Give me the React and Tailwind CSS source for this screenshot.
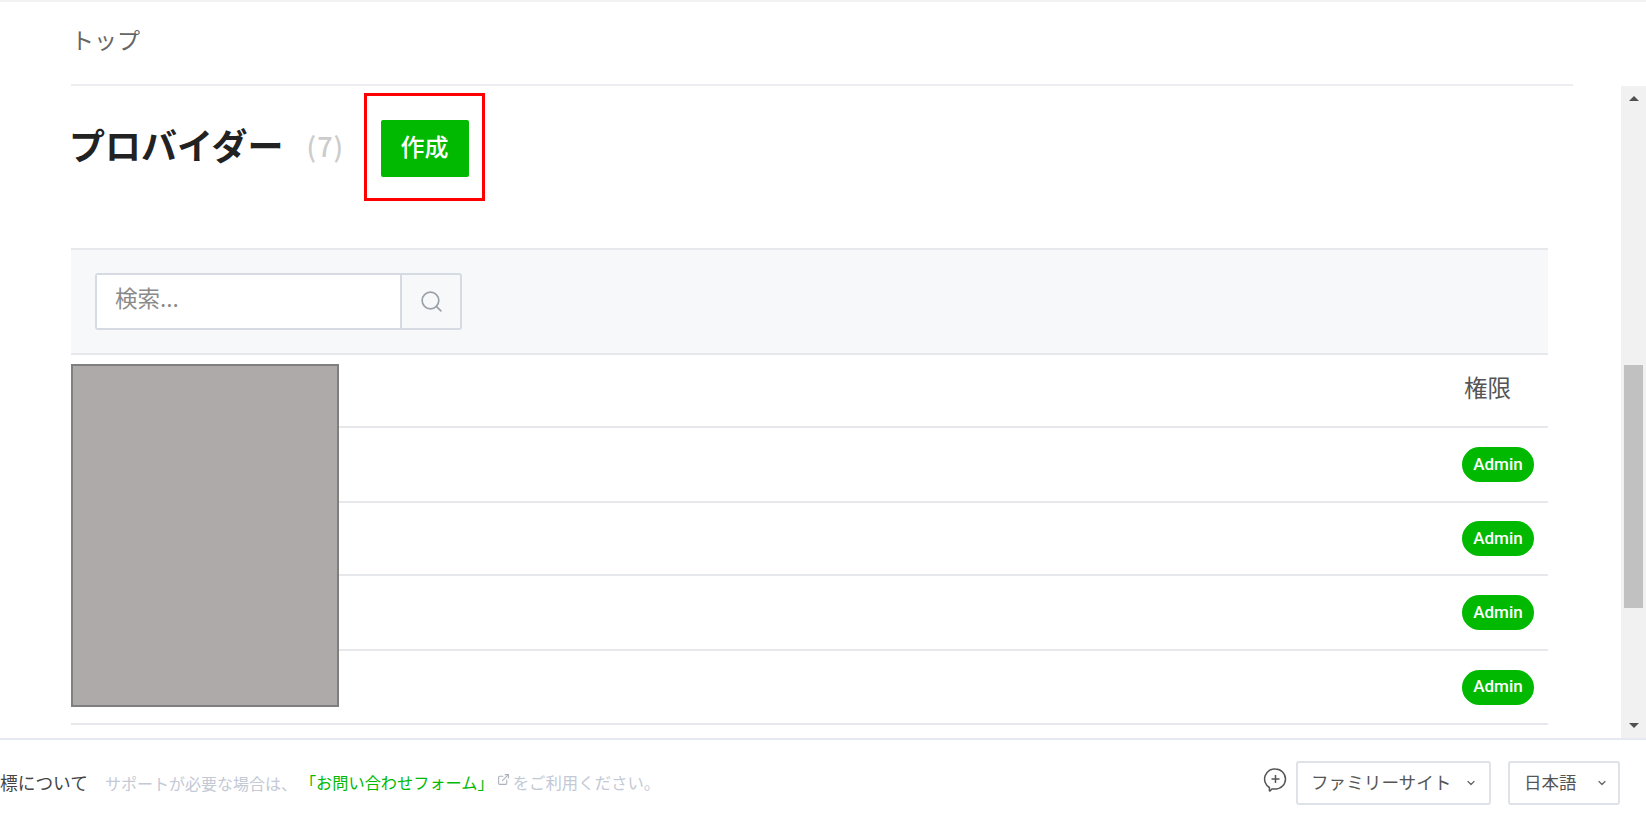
import React from 'react';
import { ChevronDown, ExternalLink, Search } from 'lucide-react';

const jp = 'font-["Noto_Sans_CJK_JP","Noto_Sans",sans-serif]';

const rows = ['h-[75px]', 'h-[73px]', 'h-[75px]', 'h-[74px]'];

const App = () => {
  return (
    <div className={`flex h-[825px] w-[1646px] flex-col overflow-hidden bg-white ${jp}`}>
      {/* breadcrumb */}
      <div className="border-t-2 border-[#f1f1f1] px-[71px]">
        <div className="mr-[2px] flex h-[84px] items-center border-b-2 border-[#eceef1] pb-[8px] text-[23px] text-[#666]">
          トップ
        </div>
      </div>

      <div className="flex min-h-0 flex-1">
        <main className="relative min-w-0 flex-1 pl-[71px] pr-[73px]">
          {/* title */}
          <div className="flex h-[162px] items-start">
            <h1 className="mt-[35px] -ml-[2px] text-[36px] font-bold leading-[46px] text-[#222]">プロバイダー</h1>
            <span className="ml-[23px] mt-[38px] w-[36px] text-center text-[27px] font-medium leading-[44px] tracking-[1px] text-[#ccc]">(7)</span>
            <div className="relative ml-[38px] mt-[34px]">
              <button className="flex h-[57px] w-[88px] items-center justify-center rounded-[2px] bg-[#00b900] pb-[6px] text-[24px] font-medium text-white">
                作成
              </button>
              <div className="absolute -bottom-[24px] -left-[17px] -right-[16px] -top-[27px] border-[3px] border-[#ff0000]" />
            </div>
          </div>

          {/* search */}
          <div className="flex h-[107px] items-center border-y-2 border-[#e6e8ec] bg-[#f7f8fa] pl-[24px]">
            <div className="flex h-[57px] w-[367px] rounded-[3px] border-2 border-[#d6dae2]">
              <div className="flex flex-1 items-center bg-white pb-[8px] pl-[18px] text-[22.5px] text-[#8a8a8a]">検索...</div>
              <div className="flex w-[60px] items-center justify-center border-l-2 border-[#d6dae2]">
                <Search size={25} strokeWidth={1.6} className="text-[#9aa0a8]" />
              </div>
            </div>
          </div>

          {/* table */}
          <div className="flex h-[73px] items-center justify-end border-b-2 border-[#e6e8ec] pb-[6px] pr-[37px] text-[23.5px] text-[#555]">
            権限
          </div>
          {rows.map((h, i) => (
            <div key={i} className={`flex ${h} items-center justify-end border-b-2 border-[#e6e8ec] pr-[14px]`}>
              <span className="flex h-[35px] w-[72px] items-center justify-center rounded-full bg-[#00b900] font-['Roboto',sans-serif] text-[17px] font-medium text-white">
                Admin
              </span>
            </div>
          ))}

          {/* redacted block over the first column */}
          <div className="absolute left-[71px] top-[278px] h-[343px] w-[268px] border-2 border-[#7f7f7f] bg-[#aeaaa9]" />
        </main>

        {/* scrollbar */}
        <div className="flex w-[25px] flex-col items-center bg-[#f1f1f1]">
          <div className="flex h-[25px] items-center justify-center">
            <div className="h-0 w-0 border-x-[5px] border-b-[5px] border-x-transparent border-b-[#505050]" />
          </div>
          <div className="mt-[254px] h-[243px] w-[19px] bg-[#c1c1c1]" />
          <div className="mt-auto flex h-[25px] items-center justify-center">
            <div className="h-0 w-0 border-x-[5px] border-t-[5px] border-x-transparent border-t-[#505050]" />
          </div>
        </div>
      </div>

      {/* footer */}
      <footer className="flex h-[87px] items-center overflow-hidden border-t-2 border-[#e6eaf0] pr-[26px]">
        <span className="whitespace-nowrap text-[17.7px] text-[#444]">標について</span>
        <span className="ml-[17px] whitespace-nowrap text-[16px] text-[#c3c9d5]">サポートが必要な場合は、</span>
        <span className="ml-[3px] whitespace-nowrap text-[16.2px] text-[#00b900]">「お問い合わせフォーム」</span>
        <ExternalLink size={13} className="mb-[6px] ml-[3px] shrink-0 text-[#aab0bc]" />
        <span className="ml-[3px] whitespace-nowrap text-[16.4px] text-[#c3c9d5]">をご利用ください。</span>

        <svg width="25" height="25" viewBox="0 0 25 25" fill="none" stroke="#555" strokeWidth="1.5" className="ml-auto mb-[6px] shrink-0">
          <path d="M12.5 2a10 10 0 0 1 0 20H9l-1.8 1.8c-.4.3-.8 0-.8-.4v-2.9A10 10 0 0 1 12.5 2Z" />
          <path d="M12.5 8v8M8.5 12h8" />
        </svg>
        <button className="ml-[8px] flex h-[44px] w-[195px] items-center rounded-[3px] border-2 border-[#dfe2e8] pl-[13px] text-[17.6px] text-[#555]">
          ファミリーサイト
          <ChevronDown size={12} strokeWidth={2.5} className="ml-[14px] text-[#666]" />
        </button>
        <button className="ml-[17px] flex h-[44px] w-[112px] items-center rounded-[3px] border-2 border-[#dfe2e8] pl-[14px] text-[17.5px] text-[#555]">
          日本語
          <ChevronDown size={12} strokeWidth={2.5} className="ml-[19px] text-[#666]" />
        </button>
      </footer>
    </div>
  );
};

export default App;
